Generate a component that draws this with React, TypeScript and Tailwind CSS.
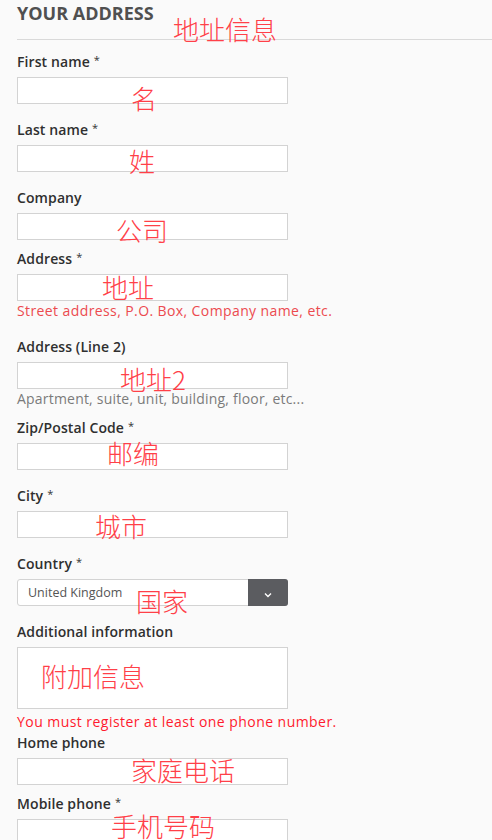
import React from "react";

const font = { fontFamily: '"Open Sans", "Noto Sans", sans-serif' };

function Label({ text, req, mt }: { text: string; req?: boolean; mt: string }) {
  return (
    <div className={`${mt} h-[20px] text-[14px] leading-[20px] font-semibold text-[#2f2f2f] tracking-[0.1px]`}>
      {text}
      {req && <sup className="ml-[4px] text-[11px] font-normal text-[#333] relative top-[-3px]">*</sup>}
    </div>
  );
}

function Input() {
  return <div className="mt-[5px] h-[27px] w-[271px] border border-[#d3d3d3] bg-white" />;
}

const notes: { t: string; x: number; y: number }[] = [
  { t: "地址信息", x: 173, y: 13 },
  { t: "名", x: 131, y: 82 },
  { t: "姓", x: 129, y: 145 },
  { t: "公司", x: 116, y: 214 },
  { t: "地址", x: 102, y: 271 },
  { t: "地址2", x: 120, y: 363 },
  { t: "邮编", x: 107, y: 437 },
  { t: "城市", x: 95, y: 510 },
  { t: "国家", x: 136, y: 585 },
  { t: "附加信息", x: 41, y: 660 },
  { t: "家庭电话", x: 131, y: 754 },
  { t: "手机号码", x: 111, y: 810 },
];

export default function App() {
  return (
    <div className="relative w-[492px] h-[840px] overflow-hidden bg-[#fafafa]" style={font}>
      <div className="pl-[17px]">
        <div className="h-[40px] border-b border-[#d9d9d9]">
          <div className="text-[18px] leading-[27px] font-bold text-[#505050] uppercase">Your address</div>
        </div>

        <Label text="First name" req mt="mt-[12px]" />
        <Input />
        <Label text="Last name" req mt="mt-[16px]" />
        <Input />
        <Label text="Company" mt="mt-[16px]" />
        <Input />
        <Label text="Address" req mt="mt-[9px]" />
        <Input />
        <div className="mt-[1px] h-[18px] text-[14px] leading-[18px] tracking-[0.4px] text-[#ec4a4f] whitespace-nowrap">
          Street address, P.O. Box, Company name, etc.
        </div>
        <Label text="Address (Line 2)" mt="mt-[17px]" />
        <Input />
        <div className="mt-[1px] h-[18px] text-[14px] leading-[18px] tracking-[0.2px] text-[#7a7a7a] whitespace-nowrap">
          Apartment, suite, unit, building, floor, etc...
        </div>
        <Label text="Zip/Postal Code" req mt="mt-[10px]" />
        <Input />
        <Label text="City" req mt="mt-[16px]" />
        <Input />
        <Label text="Country" req mt="mt-[16px]" />
        <div className="mt-[5px] flex h-[27px] w-[271px] rounded-[3px] border border-[#d3d3d3] bg-white">
          <div className="flex-1 pl-[10px] text-[12.5px] leading-[25px] text-[#555]">United Kingdom</div>
          <div className="flex w-[40px] items-center justify-center rounded-r-[3px] bg-[#5b5c60] -my-px -mr-px">
            <svg width="8" height="6" viewBox="0 0 8 6" className="mt-[4px]">
              <path d="M1 1.5 L4 4.5 L7 1.5" stroke="#ffffff" strokeWidth="1.4" fill="none" />
            </svg>
          </div>
        </div>
        <Label text="Additional information" mt="mt-[16px]" />
        <div className="mt-[5px] h-[62px] w-[271px] border border-[#d3d3d3] bg-white" />
        <div className="mt-[4px] h-[18px] text-[14px] leading-[18px] tracking-[0.45px] text-[#ff1a2e] whitespace-nowrap">
          You must register at least one phone number.
        </div>
        <Label text="Home phone" mt="mt-[2px]" />
        <Input />
        <Label text="Mobile phone" req mt="mt-[9px]" />
        <Input />
      </div>

      {notes.map((n) => (
        <div
          key={n.t}
          className="absolute text-[26px] leading-[32px] text-[#ff4048] whitespace-nowrap"
          style={{ left: n.x, top: n.y, fontFamily: '"Noto Sans CJK SC", sans-serif', fontWeight: 300 }}
        >
          {n.t}
        </div>
      ))}
    </div>
  );
}
